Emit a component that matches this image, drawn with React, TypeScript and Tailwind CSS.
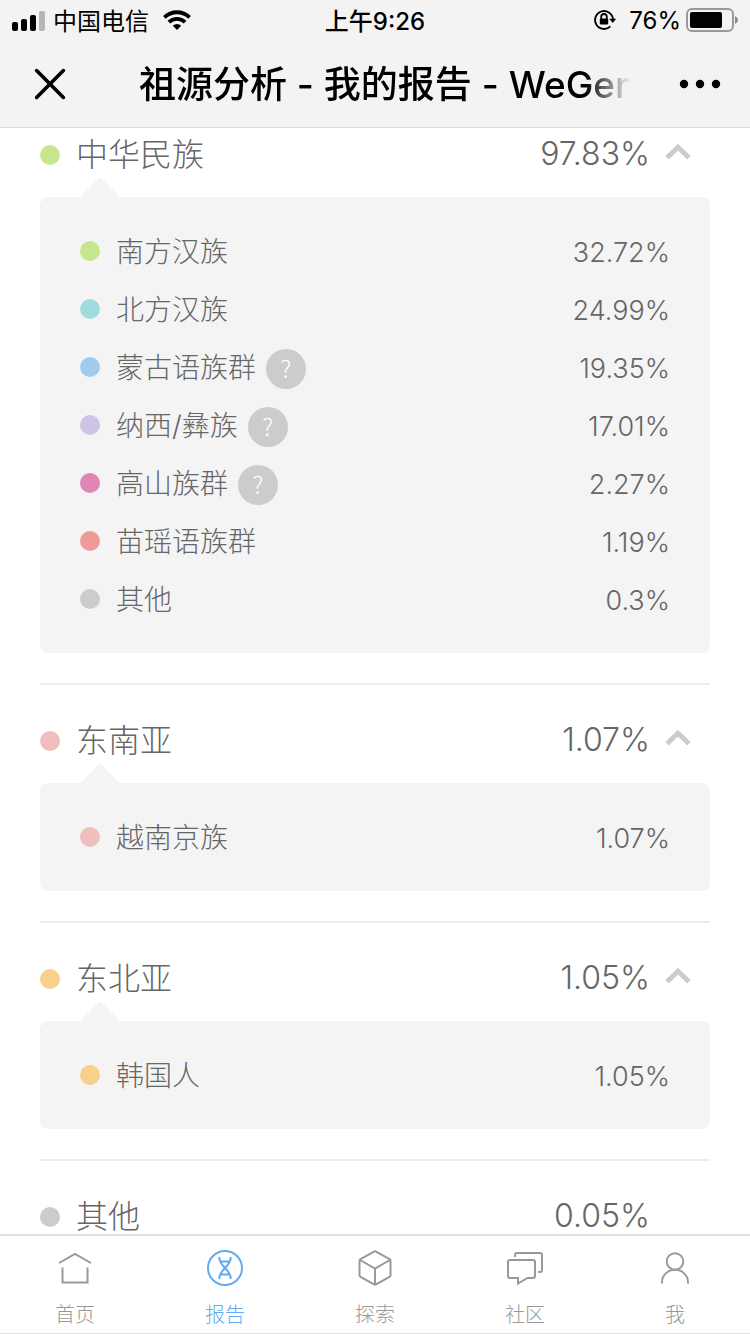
import React, { useState } from 'react';

interface Population {
    name: string;
    percent: string;
    dot: string;
    hint?: boolean;
}

interface Region {
    name: string;
    percent: string;
    dot: string;
    items: Population[];
}

const regions: Region[] = [
    {
        name: '中华民族',
        percent: '97.83%',
        dot: 'bg-[#c7e78f]',
        items: [
            { name: '南方汉族', percent: '32.72%', dot: 'bg-[#c7e78f]' },
            { name: '北方汉族', percent: '24.99%', dot: 'bg-[#a0dcdd]' },
            { name: '蒙古语族群', percent: '19.35%', dot: 'bg-[#9fcbef]', hint: true },
            { name: '纳西/彝族', percent: '17.01%', dot: 'bg-[#cfc4e8]', hint: true },
            { name: '高山族群', percent: '2.27%', dot: 'bg-[#e086b5]', hint: true },
            { name: '苗瑶语族群', percent: '1.19%', dot: 'bg-[#f09a98]' },
            { name: '其他', percent: '0.3%', dot: 'bg-[#cccccc]' },
        ],
    },
    {
        name: '东南亚',
        percent: '1.07%',
        dot: 'bg-[#f0bfbd]',
        items: [{ name: '越南京族', percent: '1.07%', dot: 'bg-[#f0bfbd]' }],
    },
    {
        name: '东北亚',
        percent: '1.05%',
        dot: 'bg-[#f8cf8b]',
        items: [{ name: '韩国人', percent: '1.05%', dot: 'bg-[#f8cf8b]' }],
    },
    { name: '其他', percent: '0.05%', dot: 'bg-[#cccccc]', items: [] },
];

const StatusBar: React.FC = () => (
    <div className="flex h-10 items-center justify-between px-3 pt-0.5 text-2xl">
        <div className="flex flex-1 items-center">
            <svg width="33" height="20" viewBox="0 0 33 20" className="mr-2" aria-hidden="true">
                <rect x="0" y="11" width="6" height="9" rx="2" />
                <rect x="9" y="8" width="6" height="12" rx="2" />
                <rect x="18" y="4" width="6" height="16" rx="2" />
                <rect x="27" y="0" width="6" height="20" rx="2" fill="#b4b6b6" />
            </svg>
            <span className="pt-0.5">中国电信</span>
            <svg width="28" height="20" viewBox="0 0 28 20" className="mb-0.5 ml-3.5" aria-hidden="true">
                <g fill="none" stroke="#000" strokeWidth="3.8">
                    <path d="M1.4 7.4a18 18 0 0 1 25.2 0" />
                    <path d="M5.9 12.2a11.5 11.5 0 0 1 16.2 0" />
                </g>
                <path d="M14 20l-4.200-4.200a6 6 0 0 1 8.400 0z" />
            </svg>
        </div>
        <span className="pt-0.5 font-medium">上午9:26</span>
        <div className="flex flex-1 items-center justify-end">
            <svg width="24" height="22" viewBox="0 0 24 22" className="mb-0.5 mr-3" fill="none" stroke="#000" strokeWidth="1.8" aria-hidden="true">
                <path d="M17.400 17.400a9 9 0 1 1 2.600-7.400" />
                <path d="M16.200 9.800h7l-3.500 4.200z" fill="#000" stroke="none" />
                <path d="M8.200 10V7.800a2.800 2.800 0 0 1 5.600 0V10" />
                <rect x="6.800" y="9.600" width="8.400" height="6" rx="1" fill="#000" stroke="none" />
            </svg>
            <span>76%</span>
            <svg width="53" height="24" viewBox="0 0 53 24" className="mb-0.5 ml-1" aria-hidden="true">
                <rect x="2" y="1" width="46" height="22" rx="5" fill="none" stroke="#999" strokeWidth="2" />
                <rect x="5" y="4" width="32" height="16" rx="2" />
                <path d="M50 8v8q3-1.500 3-4t-3-4z" fill="#888" />
            </svg>
        </div>
    </div>
);

const TitleBar: React.FC = () => (
    <div className="flex h-[87px] items-center pl-[34px] pr-7">
        <button type="button" aria-label="关闭">
            <svg width="32" height="32" viewBox="0 0 32 32" fill="none" stroke="#000" strokeWidth="3.6" strokeLinecap="round">
                <path d="M2.600 2.600l26.800 26.800M29.400 2.600L2.600 29.400" />
            </svg>
        </button>
        <h1 className="ml-[73px] mr-8 flex-1 whitespace-nowrap pt-0.5 text-[37px] font-medium [mask-image:linear-gradient(to_right,#000_88%,transparent_97%)]">
            祖源分析 - 我的报告 - WeGen
        </h1>
        <button type="button" aria-label="更多">
            <svg width="44" height="10" viewBox="0 0 44 10">
                <circle cx="6" cy="5" r="4.2" />
                <circle cx="22" cy="5" r="4.2" />
                <circle cx="38" cy="5" r="4.2" />
            </svg>
        </button>
    </div>
);

const PopulationRow: React.FC<{ item: Population }> = ({ item }) => (
    <li className="flex h-[58px] items-center">
        <span className={`size-5 rounded-full ${item.dot}`} />
        <span className="ml-4 pt-0.5 text-[28px]">{item.name}</span>
        {item.hint && (
            <button
                type="button"
                aria-label={`${item.name}说明`}
                className="ml-2.5 mt-1 size-10 rounded-full bg-[#cccccc] pb-0.5 font-['Noto_Sans_CJK_SC',sans-serif] text-2xl leading-none text-white"
            >
                ?
            </button>
        )}
        <span className="ml-auto pt-0.5 text-[27px]">{item.percent}</span>
    </li>
);

const RegionSection: React.FC<{ region: Region }> = ({ region }) => {
    const [open, setOpen] = useState(true);
    const expandable = region.items.length > 0;

    return (
        <section className="border-b-2 border-[#ececec] pt-8 first:pt-[3px] last:border-b-0">
            <div className="flex h-12 items-center pr-[18px]">
                <span className={`size-5 rounded-full ${region.dot}`} />
                <h2 className="ml-4 text-[32px]">{region.name}</h2>
                <span className="ml-auto pb-0.5 text-[32px]">{region.percent}</span>
                <div className="ml-3.5 w-7 pb-1">
                    {expandable && (
                        <button type="button" aria-label={region.name} aria-expanded={open} onClick={() => setOpen(!open)} className="block">
                            <svg width="28" height="20" viewBox="0 0 28 20" fill="none" stroke="#cccccc" strokeWidth="4.8" className={open ? '' : 'rotate-180'}>
                                <path d="M3 14.800L14 4.200l11 10.600" />
                            </svg>
                        </button>
                    )}
                </div>
            </div>
            <div className="h-[18px]" />
            {expandable && open && (
                <div className="relative mb-[30px] rounded-lg bg-[#f4f4f4] px-10 py-[25px]">
                    <svg width="40" height="20" viewBox="0 0 40 20" className="absolute -top-5 left-10" fill="#f4f4f4" aria-hidden="true">
                        <path d="M0 20L20 0l20 20z" />
                    </svg>
                    <ul>
                        {region.items.map((item) => (
                            <PopulationRow key={item.name} item={item} />
                        ))}
                    </ul>
                </div>
            )}
        </section>
    );
};

const tabs = [
    {
        label: '首页',
        icon: <path d="M2 14L18 5l16 9M5.500 18.500v15h25v-15" />,
    },
    {
        label: '报告',
        icon: (
            <>
                <circle cx="18" cy="19" r="17" />
                <path d="M12.200 8C12.200 18 23.800 20 23.800 30M23.800 8C23.800 18 12.200 20 12.200 30M13 12.500h10M13 25.500h10" />
            </>
        ),
    },
    {
        label: '探索',
        icon: <path d="M17 2.600q1-.6 2 0l13.500 7.600q1 .6 1 1.700v14.200q0 1.100-1 1.700L19 35.400q-1 .6-2 0L3.500 27.800q-1-.6-1-1.700V11.900q0-1.100 1-1.700zM3 11l15 8.500L33 11M18 19.500V35.500" />,
    },
    {
        label: '社区',
        icon: <path d="M8 8V6q0-2 2-2h23q2 0 2 2v15q0 2-2 2h-2M3 11h23q2 0 2 2v14q0 2-2 2h-5.500L11 34.500V29H3q-2 0-2-2V13q0-2 2-2z" />,
    },
    {
        label: '我',
        icon: (
            <>
                <circle cx="18" cy="12.500" r="8.300" />
                <path d="M5 34.500V33a13 12.200 0 0 1 26 0v1.500" />
            </>
        ),
    },
];

const TabBar: React.FC = () => (
    <nav className="flex h-[100px] shrink-0 border-b border-t-2 border-[#e1e1e1] bg-white">
        {tabs.map((tab) => (
            <a
                key={tab.label}
                href="#"
                className={`flex flex-1 flex-col items-center pt-[13px] text-xl font-light ${tab.label === '报告' ? 'text-[#62abf0]' : 'text-[#999999]'}`}
            >
                <svg width="36" height="38" viewBox="0 0 36 38" className="mb-3.5 overflow-visible" fill="none" stroke="currentColor" strokeWidth="2" aria-hidden="true">
                    {tab.icon}
                </svg>
                {tab.label}
            </a>
        ))}
    </nav>
);

const App: React.FC = () => {
    return (
        <div className="flex h-screen flex-col bg-white font-['Inter','Noto_Sans_CJK_SC',sans-serif] leading-none text-black">
            <header className="shrink-0 border-b border-[#d8d8d8] bg-[#f3f3f3]">
                <StatusBar />
                <TitleBar />
            </header>
            <main className="min-h-0 flex-1 overflow-y-auto px-10 font-light text-[#666666] [scrollbar-width:none]">
                {regions.map((region, index) => (
                    <RegionSection key={index} region={region} />
                ))}
            </main>
            <TabBar />
        </div>
    );
};

export default App;
